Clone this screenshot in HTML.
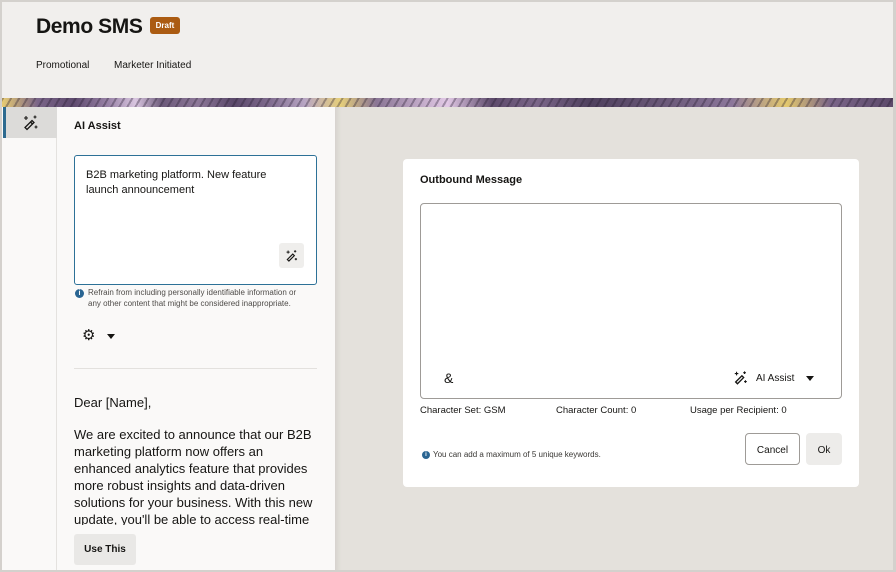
<!DOCTYPE html>
<html><head><meta charset="utf-8"><style>
*{box-sizing:border-box;margin:0;padding:0}
body{width:896px;height:572px;overflow:hidden;background:#d4d1cd;font-family:"Liberation Sans",sans-serif;color:#161513;position:relative}
.frame{position:absolute;left:2px;top:2px;width:891px;height:568px;background:#f1efed;overflow:hidden}
.abs{position:absolute}
</style></head><body>
<div class="frame">
  <div class="abs" style="left:34px;top:13px;font-size:21px;font-weight:bold;letter-spacing:-0.4px">Demo SMS</div>
  <div class="abs" style="left:148px;top:15px;width:30px;height:17px;background:#ab5b12;border-radius:3px;color:#fff;font-size:8px;font-weight:bold;text-align:center;line-height:17px">Draft</div>
  <div class="abs" style="left:34px;top:58px;font-size:10px">Promotional</div>
  <div class="abs" style="left:112px;top:58px;font-size:10px">Marketer Initiated</div>
  <div class="abs" style="left:0;top:96px;width:891px;height:9px;background:linear-gradient(90deg,#e8cc72 0%,#7a6588 4%,#5e4a6e 8%,#9a84a8 12%,#d9c6e0 15%,#6c5a7a 18%,#8d7899 22%,#5a486a 26%,#7f6b8e 30%,#b8a6c4 34%,#e6cf7a 38%,#8a7595 42%,#e2c9e6 50%,#5d4a6b 55%,#7b6689 60%,#4f405e 66%,#6d5b7b 75%,#8c779b 82%,#e4c96e 88%,#7a6588 93%,#5c496a 100%)"></div>
  <div class="abs" style="left:0;top:96px;width:891px;height:9px;background:repeating-linear-gradient(120deg,rgba(40,30,50,0.35) 0 2px,transparent 2px 7px)"></div>
  <div class="abs" style="left:0;top:105px;width:55px;height:470px;background:#faf9f8;border-right:1px solid #e4e2df"></div>
  <div class="abs" style="left:1px;top:105px;width:54px;height:31px;background:#dcdbd9;border-left:3px solid #2d6a8f"></div>
  <svg class="abs" style="left:20px;top:112px" width="18" height="18" viewBox="0 0 18 18" fill="none" stroke="#161513" stroke-width="1.3"><path d="M3 13.5l7-7 2 2-7 7z"/><path d="M8.5 8l2 2"/><path d="M4 2v4M2 4h4M13 1.5v3M11.5 3h3M14 11.5v3M12.5 13h3" stroke-width="1.1"/></svg>
  <div class="abs" style="left:55px;top:105px;width:278px;height:470px;background:#faf9f8"></div>
  <div class="abs" style="left:72px;top:118px;font-size:11px;font-weight:bold">AI Assist</div>
  <div class="abs" style="left:72px;top:153px;width:243px;height:130px;background:#fff;border:1.5px solid #2d7197;border-radius:3px"></div>
  <div class="abs" style="left:84px;top:166px;font-size:11px;line-height:14.5px;width:215px">B2B marketing platform. New feature launch announcement</div>
  <div class="abs" style="left:277px;top:241px;width:25px;height:25px;background:#efeeec;border-radius:3px"></div>
  <svg class="abs" style="left:283px;top:247px" width="14" height="14" viewBox="0 0 18 18" fill="none" stroke="#161513" stroke-width="1.5"><path d="M3 13.5l7-7 2 2-7 7z"/><path d="M4 2v4M2 4h4M13 1.5v3M11.5 3h3M14 11.5v3M12.5 13h3" stroke-width="1.2"/></svg>
  <div class="abs" style="left:73px;top:287px;width:9px;height:9px;border-radius:50%;background:#2a6592;color:#fff;font-size:7px;font-weight:bold;text-align:center;line-height:9px">i</div>
  <div class="abs" style="left:86px;top:286px;font-size:8px;line-height:10.5px;color:#4f4c49;width:220px">Refrain from including personally identifiable information or any other content that might be considered inappropriate.</div>
  <div class="abs" style="left:80px;top:326px;font-size:15px;line-height:15px">⚙</div>
  <div class="abs" style="left:105px;top:332px;width:0;height:0;border-left:4px solid transparent;border-right:4px solid transparent;border-top:5px solid #161513"></div>
  <div class="abs" style="left:72px;top:366px;width:243px;height:1px;background:#e3e1de"></div>
  <div class="abs" style="left:72px;top:392px;font-size:13px;line-height:17px">Dear [Name],</div>
  <div class="abs" style="left:72px;top:424px;width:240px;height:99px;overflow:hidden;font-size:13px;line-height:17px">We are excited to announce that our B2B marketing platform now offers an enhanced analytics feature that provides more robust insights and data-driven solutions for your business. With this new update, you'll be able to access real-time data</div>
  <div class="abs" style="left:72px;top:532px;width:62px;height:31px;background:#e9e8e6;border-radius:3px;font-size:10px;font-weight:bold;text-align:center;line-height:31px">Use This</div>
  <div class="abs" style="left:333px;top:105px;width:560px;height:470px;background:#e4e1dc;box-shadow:inset 6px 0 6px -4px rgba(0,0,0,0.08)"></div>
  <div class="abs" style="left:401px;top:157px;width:456px;height:328px;background:#fff;border-radius:4px"></div>
  <div class="abs" style="left:418px;top:172px;font-size:11px;font-weight:bold">Outbound Message</div>
  <div class="abs" style="left:418px;top:201px;width:422px;height:196px;border:1px solid #9e9b97;border-radius:4px"></div>
  <div class="abs" style="left:442px;top:368px;font-size:14px">&amp;</div>
  <svg class="abs" style="left:731px;top:368px" width="16" height="16" viewBox="0 0 18 18" fill="none" stroke="#161513" stroke-width="1.5"><path d="M3 13.5l7-7 2 2-7 7z"/><path d="M4 2v4M2 4h4M13 1.5v3M11.5 3h3M14 11.5v3M12.5 13h3" stroke-width="1.2"/></svg>
  <div class="abs" style="left:754px;top:371px;font-size:10px">AI Assist</div>
  <div class="abs" style="left:804px;top:374px;width:0;height:0;border-left:4.5px solid transparent;border-right:4.5px solid transparent;border-top:5px solid #161513"></div>
  <div class="abs" style="left:418px;top:403px;font-size:9.5px">Character Set: GSM</div>
  <div class="abs" style="left:554px;top:403px;font-size:9.5px">Character Count: 0</div>
  <div class="abs" style="left:688px;top:403px;font-size:9.5px">Usage per Recipient: 0</div>
  <div class="abs" style="left:420px;top:449px;width:8px;height:8px;border-radius:50%;background:#2a6592;color:#fff;font-size:6px;font-weight:bold;text-align:center;line-height:8px">i</div>
  <div class="abs" style="left:431px;top:448px;font-size:8px;color:#3a3835">You can add a maximum of 5 unique keywords.</div>
  <div class="abs" style="left:743px;top:431px;width:55px;height:32px;border:1px solid #9e9b97;border-radius:4px;font-size:10px;text-align:center;line-height:34px">Cancel</div>
  <div class="abs" style="left:804px;top:431px;width:36px;height:32px;background:#edecea;border-radius:4px;font-size:10px;text-align:center;line-height:36px">Ok</div>
</div>
</body></html>
